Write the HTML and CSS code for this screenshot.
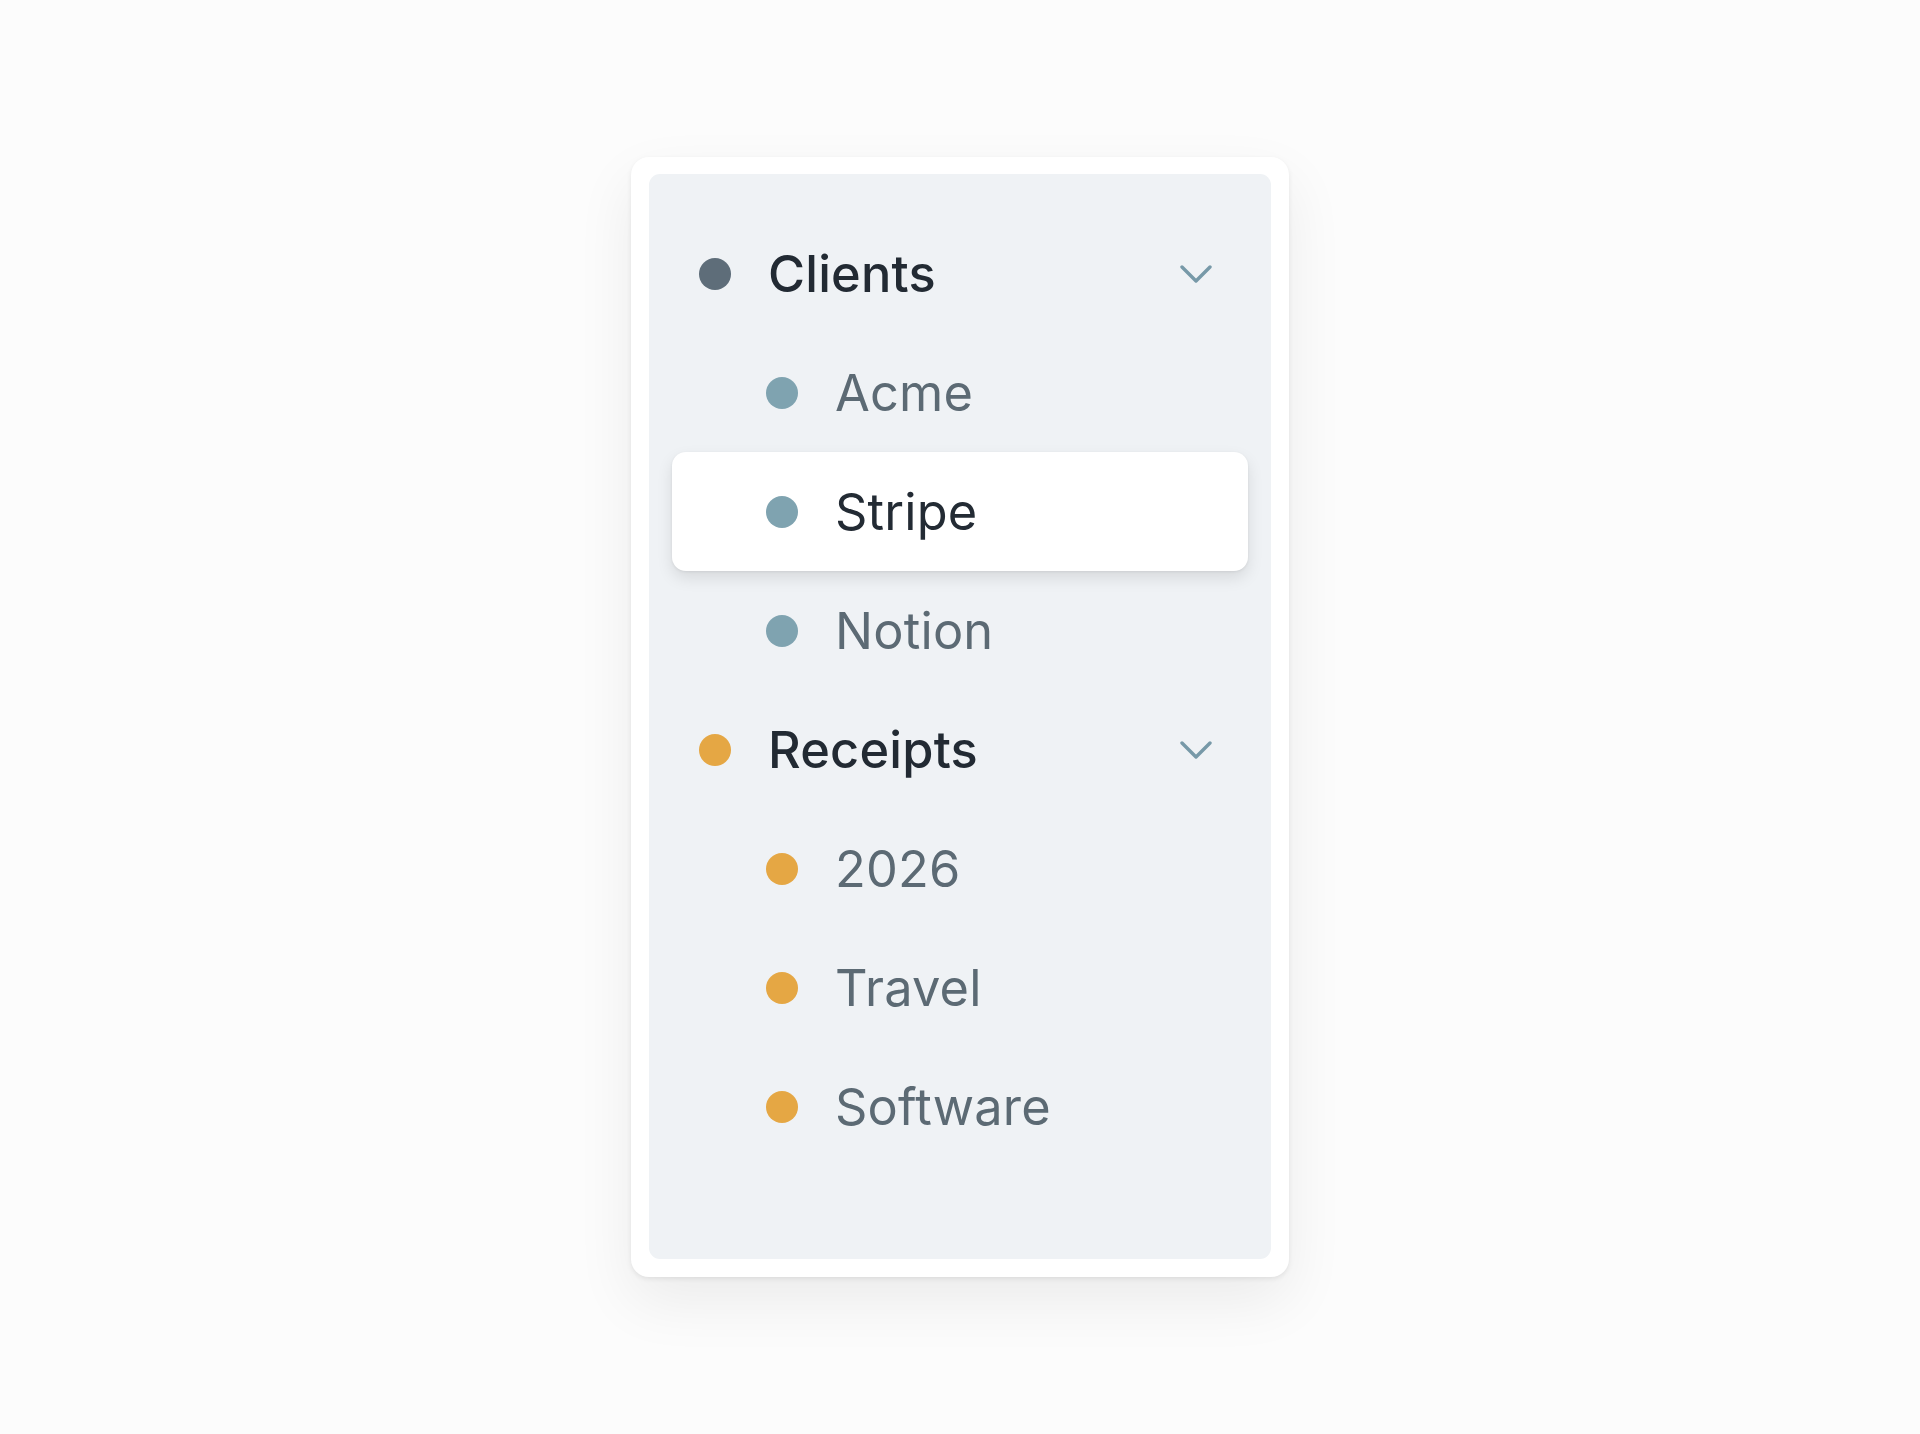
FILE: index.html
```html
<!DOCTYPE html>
<html lang="en">
<head>
<meta charset="utf-8">
<title>Folders</title>
<link rel="stylesheet" href="styles.css">
</head>
<body>
<div class="card">
  <nav class="panel">
    <div class="row parent">
      <span class="dot dot-slate"></span>
      <span class="label">Clients</span>
      <svg class="chev" viewBox="0 0 32 18" width="32" height="18"><polyline points="2,2 16,16 30,2"/></svg>
    </div>
    <div class="row child">
      <span class="dot dot-blue"></span>
      <span class="label">Acme</span>
    </div>
    <div class="row child selected">
      <span class="dot dot-blue"></span>
      <span class="label">Stripe</span>
    </div>
    <div class="row child">
      <span class="dot dot-blue"></span>
      <span class="label">Notion</span>
    </div>
    <div class="row parent">
      <span class="dot dot-orange"></span>
      <span class="label">Receipts</span>
      <svg class="chev" viewBox="0 0 32 18" width="32" height="18"><polyline points="2,2 16,16 30,2"/></svg>
    </div>
    <div class="row child">
      <span class="dot dot-orange"></span>
      <span class="label">2026</span>
    </div>
    <div class="row child">
      <span class="dot dot-orange"></span>
      <span class="label">Travel</span>
    </div>
    <div class="row child">
      <span class="dot dot-orange"></span>
      <span class="label">Software</span>
    </div>
  </nav>
</div>
</body>
</html>
```

FILE: styles.css
```css
html, body {
  margin: 0;
  padding: 0;
}
body {
  background: #fcfcfc;
  min-height: 100vh;
  display: flex;
  align-items: center;
  justify-content: center;
  font-family: Inter, "Noto Sans", "Liberation Sans", sans-serif;
}
.card {
  background: #ffffff;
  border-radius: 18px;
  padding: 17px 18px 18px 18px;
  box-shadow: 0 2px 5px rgba(0, 0, 0, 0.08), 0 24px 60px rgba(0, 0, 0, 0.07);
}
.panel {
  width: 622px;
  height: 1085px;
  box-sizing: border-box;
  padding: 40px 23px 0 23px;
  background: #eff2f5;
  border-radius: 11px;
  display: flex;
  flex-direction: column;
}
.row {
  height: 119px;
  flex: 0 0 119px;
  display: flex;
  align-items: center;
  gap: 37px;
  padding-left: 27px;
  padding-right: 36px;
  border-radius: 14px;
}
.row.child {
  padding-left: 94px;
}
.label {
  font-size: 50.5px;
  line-height: 1.21;
  color: #5c6a74;
  font-weight: 400;
  letter-spacing: 0.2px;
}
.parent .label {
  color: #222a33;
  font-weight: 500;
}
.selected {
  background: #ffffff;
  box-shadow: 0 7px 16px rgba(0, 0, 0, 0.1), 0 1px 3px rgba(0, 0, 0, 0.07);
}
.selected .label {
  color: #232b34;
}
.dot {
  width: 32px;
  height: 32px;
  border-radius: 50%;
  flex: 0 0 32px;
}
.dot-slate { background: #5e6d79; }
.dot-blue { background: #7fa3b0; }
.dot-orange { background: #e5a744; }
.chev {
  margin-left: auto;
  fill: none;
  stroke: #7799a8;
  stroke-width: 3.4;
  stroke-linecap: round;
  stroke-linejoin: round;
}
```
